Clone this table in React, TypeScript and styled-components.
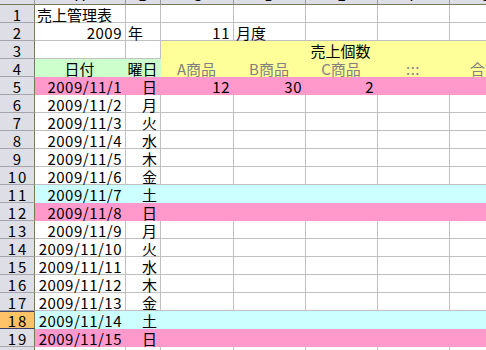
import React from "react";
import styled, { createGlobalStyle } from "styled-components";

const Global = createGlobalStyle`
  html, body { margin: 0; padding: 0; background: #fff; overflow: hidden; }
  body { font-family: "Noto Sans CJK JP", "Liberation Sans", sans-serif; }
`;

const COLS = [91, 35, 73, 72, 72, 72, 72];
const LETTERS = ["A", "B", "C", "D", "E", "F", "G"];

const Sheet = styled.div`
  display: grid;
  grid-template-columns: 35px ${COLS.map((c) => c + "px").join(" ")};
  grid-template-rows: 5px repeat(20, 18px);
  width: max-content;
  font-size: 15px;
  color: #000;
`;

const ColHead = styled.div`
  box-sizing: border-box;
  height: 5px;
  background: #dedee6;
  border-right: 1px solid #9a9a9a;
  border-bottom: 1px solid #77775a;
  overflow: hidden;
  display: flex;
  align-items: flex-end;
  justify-content: center;
  & > span { line-height: 18px; display: block; }
`;

const RowHead = styled.div<{ $active?: boolean }>`
  box-sizing: border-box;
  height: 18px;
  background: ${(p) => (p.$active ? "#ffc266" : "#dedee6")};
  border-right: 1px solid #77775a;
  border-bottom: 1px solid ${(p) => (p.$active ? "#3c3c6a" : "#a4a4ac")};
  ${(p) => (p.$active ? "box-shadow: inset 0 1px 0 #3c3c6a;" : "")}
  display: flex;
  align-items: center;
  justify-content: center;
  padding-top: 1px;
  line-height: 17px;
  letter-spacing: 2px;
  text-indent: 2px;
`;

const Cell = styled.div<{ $bg?: string; $align?: string; $muted?: boolean; $span?: number; $num?: boolean }>`
  box-sizing: border-box;
  height: 18px;
  background: ${(p) => p.$bg || "#fff"};
  border-right: 1px solid ${(p) => p.$bg || "#c0c0c0"};
  border-bottom: 1px solid ${(p) => p.$bg || "#c0c0c0"};
  ${(p) => (p.$span ? `grid-column: span ${p.$span};` : "")}
  color: ${(p) => (p.$muted ? "#808080" : "#000")};
  display: flex;
  align-items: center;
  justify-content: ${(p) =>
    p.$align === "right" ? "flex-end" : p.$align === "center" ? "center" : "flex-start"};
  padding: 1px 3px 0 2px;
  line-height: 17px;
  letter-spacing: ${(p) => (p.$num ? "0.5px" : "0")};
  white-space: nowrap;
  overflow: visible;
`;

type C = { t?: string; a?: string; bg?: string; m?: boolean; span?: number; n?: boolean };

const PINK = "#ff99cc";
const CYAN = "#ccffff";
const YEL = "#ffff99";
const GRN = "#ccffcc";

const DAYS = ["日", "月", "火", "水", "木", "金", "土"];

function buildRows(): C[][] {
  const rows: C[][] = [];
  rows.push([{ t: "売上管理表" }, {}, {}, {}, {}, {}, {}]);
  rows.push([{ t: "2009", a: "right", n: true }, { t: "年" }, { t: "11", a: "right", n: true }, { t: "月度" }, {}, {}, {}]);
  rows.push([{}, {}, { t: "売上個数", a: "center", bg: YEL, span: 5 }]);
  rows.push([
    { t: "日付", a: "center", bg: GRN },
    { t: "曜日", a: "center", bg: GRN },
    { t: "A商品", a: "center", bg: YEL, m: true },
    { t: "B商品", a: "center", bg: YEL, m: true },
    { t: "C商品", a: "center", bg: YEL, m: true },
    { t: ":::", a: "center", bg: YEL, m: true, n: true },
    { t: "合計", a: "center", bg: YEL, m: true },
  ]);
  for (let d = 1; d <= 15; d++) {
    const dow = (d - 1) % 7;
    const bg = dow === 0 ? PINK : dow === 6 ? CYAN : undefined;
    const extra: C[] =
      d === 1
        ? [
            { t: "12", a: "right", bg, n: true },
            { t: "30", a: "right", bg, n: true },
            { t: "2", a: "right", bg, n: true },
            { bg },
            { bg },
          ]
        : [{ bg }, { bg }, { bg }, { bg }, { bg }];
    rows.push([{ t: `2009/11/${d}`, a: "right", bg, n: true }, { t: DAYS[dow], a: "right", bg }, ...extra]);
  }
  rows.push([{}, {}, {}, {}, {}, {}, {}]);
  return rows;
}

export default function App() {
  const rows = buildRows();
  return (
    <>
      <Global />
      <Sheet>
        <ColHead />
        {LETTERS.map((l) => (
          <ColHead key={l}>
            <span>{l}</span>
          </ColHead>
        ))}
        {rows.map((r, i) => (
          <React.Fragment key={i}>
            <RowHead $active={i + 1 === 18}>{i + 1}</RowHead>
            {r.map((c, j) => (
              <Cell key={j} $bg={c.bg} $align={c.a} $muted={c.m} $span={c.span} $num={c.n}>
                {c.t}
              </Cell>
            ))}
          </React.Fragment>
        ))}
      </Sheet>
    </>
  );
}
